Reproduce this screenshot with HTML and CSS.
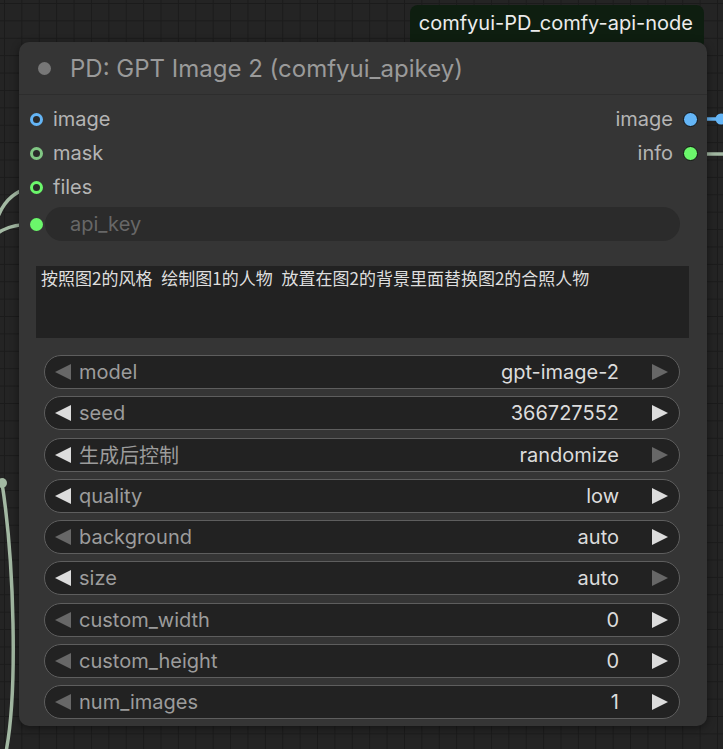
FILE: index.html
```html
<!DOCTYPE html>
<html lang="en">
<head>
<meta charset="UTF-8">
<meta name="viewport" content="width=device-width, initial-scale=1.0">
<title>PD: GPT Image 2</title>
<link rel="stylesheet" href="styles.css">
</head>
<body>
<div class="canvas">
  <!-- links between nodes -->
  <svg class="wires" width="723" height="749" viewBox="0 0 723 749">
    <path d="M -4 222 Q 6 190 36 187" class="wire"/>
    <path d="M -2 233 Q 10 224 36 224" class="wire"/>
    <path d="M 2 483 C 14 560 18 690 6 752" class="wire"/>
    <circle cx="2" cy="483" r="5" fill="#a3b9a3"/>
    <path d="M 700 119 L 723 119" stroke="#64b5f6" stroke-width="3.5" fill="none"/>
    <circle cx="721" cy="119" r="5.5" fill="#64b5f6"/>
    <path d="M 700 154 L 723 154" class="wire"/>
  </svg>

  <div class="node-wrap">
    <div class="source-tag">comfyui-PD_comfy-api-node</div>
    <div class="node">
      <div class="node-title">
        <span class="title-dot"></span>
        <span class="title-text">PD: GPT Image 2 (comfyui_apikey)</span>
      </div>

      <div class="slots">
        <div class="slot-col">
          <div class="slot"><span class="dot ring blue"></span>image</div>
          <div class="slot"><span class="dot ring mask"></span>mask</div>
          <div class="slot"><span class="dot ring green"></span>files</div>
        </div>
        <div class="slot-col out">
          <div class="slot">image<span class="dot solid blue"></span></div>
          <div class="slot">info<span class="dot solid green"></span></div>
        </div>
      </div>

      <div class="key-row">
        <span class="dot fill green"></span>
        <div class="key-input">api_key</div>
      </div>

      <div class="prompt">按照图2的风格 绘制图1的人物 放置在图2的背景里面替换图2的合照人物</div>

      <div class="widgets">
        <div class="widget"><span class="arr left dim"></span><span class="w-label">model</span><span class="w-value">gpt-image-2</span><span class="arr right dim"></span></div>
        <div class="widget"><span class="arr left"></span><span class="w-label">seed</span><span class="w-value">366727552</span><span class="arr right"></span></div>
        <div class="widget"><span class="arr left"></span><span class="w-label">生成后控制</span><span class="w-value">randomize</span><span class="arr right dim"></span></div>
        <div class="widget"><span class="arr left"></span><span class="w-label">quality</span><span class="w-value">low</span><span class="arr right"></span></div>
        <div class="widget"><span class="arr left dim"></span><span class="w-label">background</span><span class="w-value">auto</span><span class="arr right"></span></div>
        <div class="widget"><span class="arr left"></span><span class="w-label">size</span><span class="w-value">auto</span><span class="arr right dim"></span></div>
        <div class="widget"><span class="arr left dim"></span><span class="w-label">custom_width</span><span class="w-value">0</span><span class="arr right"></span></div>
        <div class="widget"><span class="arr left dim"></span><span class="w-label">custom_height</span><span class="w-value">0</span><span class="arr right"></span></div>
        <div class="widget"><span class="arr left dim"></span><span class="w-label">num_images</span><span class="w-value">1</span><span class="arr right"></span></div>
      </div>
    </div>
  </div>
</div>
</body>
</html>
```

FILE: styles.css
```css
body {
  margin: 0;
  overflow: hidden;
  background: #232323;
  font-family: Inter, 'Noto Sans CJK SC', sans-serif;
}
.canvas {
  position: relative;
  width: 723px;
  height: 749px;
  overflow: hidden;
  background-color: #242424;
  background-image:
    linear-gradient(#1b1b1b 1px, transparent 1px),
    linear-gradient(90deg, #1b1b1b 1px, transparent 1px);
  background-size: 17.4px 17.4px;
  background-position: 4px 3px;
}
.wires {
  position: absolute;
  top: 0;
  left: 0;
}
.wire {
  fill: none;
  stroke: #a3b9a3;
  stroke-width: 3.5;
}
.node-wrap {
  position: absolute;
  left: 19px;
  top: 5px;
  width: 688px;
  display: flex;
  flex-direction: column;
  align-items: flex-end;
}
.source-tag {
  background: #0e1e10;
  color: #ececec;
  font-size: 20px;
  line-height: 37px;
  height: 45px;
  padding: 0 11px 0 9px;
  margin-right: 3px;
  margin-bottom: -8px;
  border-radius: 8px;
}
.node {
  position: relative;
  width: 688px;
  height: 684px;
  box-sizing: border-box;
  background: #353535;
  border-radius: 10px;
  box-shadow: 0 2px 8px rgba(0, 0, 0, 0.45);
}
.node-title {
  display: flex;
  align-items: center;
  height: 52px;
  padding-left: 19px;
  border-bottom: 1px solid #2d2d2d;
}
.title-dot {
  width: 13px;
  height: 13px;
  border-radius: 50%;
  background: #777;
}
.title-text {
  margin-left: 19px;
  font-size: 24px;
  color: #9a9a9a;
  padding-top: 1px;
}
.slots {
  display: flex;
  justify-content: space-between;
  padding: 7px 9px 0 11px;
}
.slot {
  display: flex;
  align-items: center;
  height: 34px;
  font-size: 20px;
  color: #b4b4b4;
}
.slot-col.out .slot {
  justify-content: flex-end;
}
.dot {
  width: 13px;
  height: 13px;
  border-radius: 50%;
  box-sizing: border-box;
  margin-right: 10px;
}
.out .dot {
  margin: 0 0 0 10px;
  width: 15px;
  height: 15px;
  border: 1.5px solid #111;
}
.dot.ring {
  border: 3.5px solid;
  background: #2a2a2a;
}
.ring.blue { border-color: #64b5f6; }
.ring.mask { border-color: #81c784; }
.ring.green { border-color: #6bf76b; }
.solid.blue { background: #64b5f6; }
.solid.green { background: #6bf76b; }
.fill.green {
  background: #6bf76b;
  margin-right: 0;
}
.key-row {
  display: flex;
  align-items: center;
  padding: 3px 27px 0 11px;
}
.key-input {
  flex: 1;
  margin-left: 2px;
  height: 34px;
  line-height: 34px;
  border-radius: 17px;
  background: #2b2b2b;
  color: #676767;
  font-size: 20px;
  padding-left: 25px;
}
.prompt {
  margin: 25px 18px 0 17px;
  height: 72px;
  box-sizing: border-box;
  background: #222;
  color: #dedede;
  font-family: 'Noto Sans CJK SC', sans-serif;
  font-size: 17px;
  line-height: 22px;
  word-spacing: 5px;
  padding: 1px 5px;
}
.widgets {
  display: flex;
  flex-direction: column;
  gap: 7.25px;
  margin: 17px 27px 0 25px;
}
.widget {
  display: flex;
  align-items: center;
  height: 34px;
  box-sizing: border-box;
  border: 1.5px solid #5e5e5e;
  border-radius: 17px;
  background: #222;
  padding: 0 11px 0 10px;
  font-size: 20px;
}
.w-label {
  color: #9c9c9c;
  margin-left: 8px;
  flex: 1;
}
.w-value {
  color: #dcdcdc;
  margin-right: 33px;
}
.arr {
  width: 0;
  height: 0;
  border-top: 8px solid transparent;
  border-bottom: 8px solid transparent;
}
.arr.left { border-right: 16px solid #dcdcdc; }
.arr.right { border-left: 16px solid #dcdcdc; }
.arr.left.dim { border-right-color: #676767; }
.arr.right.dim { border-left-color: #676767; }
```
